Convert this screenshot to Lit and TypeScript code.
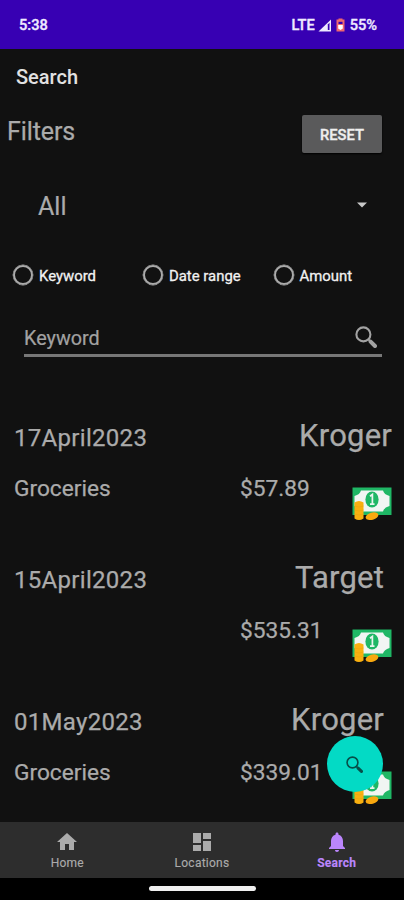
import { LitElement, html, css, svg } from "lit";
import { customElement, property } from "lit/decorators.js";

const magnifier = svg`<circle cx="8.4" cy="8.4" r="7" fill="none" stroke="currentColor" stroke-width="2.1"/><path d="M13.400 13.400L15.500 15.500" stroke="currentColor" stroke-width="2"/><path d="M15.600 15.600L20 20" stroke="currentColor" stroke-width="4" stroke-linecap="round"/>`;

@customElement("money-icon")
class MoneyIcon extends LitElement {
  static styles = css`
    :host { display: block; width: 40px; height: 34px; }
    svg { display: block; }
  `;
  render() {
    return html`<svg width="40" height="34" viewBox="0 0 40 34">
      <rect x="0.500" y="0.500" width="39" height="27.500" fill="#1fb765"/>
      <path d="M9 3.500H31Q32 7.500 37.500 9V19Q32 20.500 31 24.500H9Q8 20.500 2.500 19V9Q8 7.500 9 3.500Z" fill="#f1f5f3"/>
      <ellipse cx="20" cy="12.500" rx="6.600" ry="8" fill="#1fb765"/>
      <path d="M18 9.300L20.400 7.500V17M18 17.200H22.500" fill="none" stroke="#e8f5ee" stroke-width="1.700"/>
      <path d="M2.500 15.500Q7 12.500 11.500 15.500V31.500Q7 34.500 2.500 31.500Z" fill="#f9b010"/>
      <path d="M2.500 19Q7 21 11.500 19M2.500 23Q7 25 11.500 23M2.500 27Q7 29 11.500 27" fill="none" stroke="#eda30d" stroke-width="0.600"/>
      <ellipse cx="20" cy="29.200" rx="6.500" ry="3.600" transform="rotate(-15 20 29.200)" fill="#f9a80f"/>
    </svg>`;
  }
}

@customElement("expense-row")
class ExpenseRow extends LitElement {
  @property() date = "";
  @property() store = "";
  @property() category = "";
  @property() amount = "";
  @property({ type: Boolean, reflect: true }) wide = false;
  static styles = css`
    :host { display: block; height: 142px; box-sizing: border-box; padding: 0 12px 0 14px; color: #ababab; -webkit-text-stroke: 0.25px; }
    .top { display: flex; justify-content: space-between; align-items: baseline; height: 54px; padding-right: 8px; }
    :host([wide]) .top { padding-right: 0; }
    .date { font-size: 24px; letter-spacing: 0.3px; line-height: 36px; }
    .store { font-size: 31px; letter-spacing: 0.2px; line-height: 36px; }
    .bottom { display: grid; grid-template-columns: 226px 113px 40px; height: 52px; }
    .cell { font-size: 22.7px; line-height: 34px; }
    money-icon { margin-top: 15.400px; margin-left: -1px; }
  `;
  render() {
    return html`
      <div class="top"><span class="date">${this.date}</span><span class="store">${this.store}</span></div>
      <div class="bottom"><span class="cell">${this.category}</span><span class="cell">${this.amount}</span><money-icon></money-icon></div>`;
  }
}

@customElement("app-root")
class AppRoot extends LitElement {
  static styles = css`
    :host { display: flex; flex-direction: column; position: relative; width: 404px; height: 900px; overflow: hidden; background: #111; color: #ababab; font-family: Roboto, sans-serif; }
    * { box-sizing: border-box; }
    svg { display: block; flex: none; }
    .status { height: 49px; flex: none; background: #3700b3; color: #eee9ff; display: flex; align-items: center; padding: 1px 27px 0 19px; font-size: 14.600px; font-weight: 500; -webkit-text-stroke: 0.35px; }
    .lte { margin-left: auto; margin-right: 3px; }
    .battery { margin: 0 5px 0 4px; }
    .title { height: 56px; flex: none; padding-left: 16px; font-size: 20px; line-height: 56px; font-weight: 500; color: #e2e2e2; }
    .filters { height: 58px; flex: none; display: flex; justify-content: space-between; padding: 9px 22px 0 7px; }
    .heading { font-size: 25px; line-height: 36px; letter-spacing: -0.1px; -webkit-text-stroke: 0.25px; }
    .reset { width: 80px; height: 38px; margin-top: 1px; border: 0; border-radius: 2px; background: #5a5a5b; color: #eee; font: 500 14.700px/40px Roboto, sans-serif; padding: 0; box-shadow: 0 1px 2px #000; -webkit-text-stroke: 0.35px; }
    .select { height: 86px; flex: none; display: flex; justify-content: space-between; align-items: center; padding: 0 37px 0 38px; font-size: 25px; -webkit-text-stroke: 0.2px; }
    .select svg { margin-top: -3px; }
    .radios { height: 52px; flex: none; display: grid; grid-template-columns: 130px 130.500px 1fr; padding-left: 13px; align-items: center; color: #f1f1f1; font-size: 14.900px; -webkit-text-stroke: 0.3px; }
    .radio { display: flex; align-items: center; gap: 6px; }
    .text { padding-top: 1px; }
    .ring { width: 20px; height: 20px; border: 2.500px solid #ababab; border-radius: 50%; box-shadow: 0 0 0 0.400px #ababab; }
    .field { height: 36px; flex: none; margin: 20px 22px 0 24px; border-bottom: 3px solid #777; display: flex; justify-content: space-between; padding-right: 5px; font-size: 19.800px; line-height: 36px; color: #a2a2a2; -webkit-text-stroke: 0.2px; }
    .field svg { margin-top: 5px; }
    .list { margin-top: 60.600px; flex: 1; min-height: 0; overflow: hidden; }
    .fab { position: absolute; left: 327px; top: 736px; width: 56px; height: 56px; border-radius: 50%; background: #03dac5; color: #064f49; display: flex; align-items: center; justify-content: center; }
    .fab svg { margin-left: -1px; }
    .tabs { height: 56px; flex: none; background: #2d2d2d; display: grid; grid-template-columns: repeat(3, 1fr); }
    .tab { display: flex; flex-direction: column; align-items: center; padding-top: 8px; font-size: 12px; line-height: 14px; letter-spacing: 0.250px; gap: 2px; -webkit-text-stroke: 0.15px; }
    .tab svg { margin-top: -0.500px; margin-bottom: 0.500px; }
    .active { color: #bb86fc; font-weight: 700; }
    .gesture { height: 22px; flex: none; background: #000; display: flex; justify-content: center; padding-top: 8px; }
    .pill { width: 107px; height: 5px; border-radius: 3px; background: #efefef; margin-left: 1px; }
  `;
  tab(name: string, path: string, active = false) {
    return html`<div class="tab ${active ? "active" : ""}">
      <svg width="24" height="24" viewBox="0 0 24 24"><path fill="currentColor" d=${path}/></svg>${name}</div>`;
  }
  render() {
    return html`
      <div class="status"><span>5:38</span><span class="lte">LTE</span>
        <svg width="14" height="13" viewBox="0 0 14 13"><path d="M0.500 12.500L13 0.500V12.500Z" fill="#eee9ff"/><path d="M9.800 5.500L11.500 3.800V11H9.800Z" fill="#3700b3"/></svg>
        <svg class="battery" width="9" height="14" viewBox="0 0 9 14"><path d="M2.500 0.500H6.500V1.500H8.500V13.500H0.500V1.500H2.500Z" fill="#ee6670"/><path d="M2.500 3.800H6.500V6H2.500Z" fill="#3700b3"/><path d="M2.200 7H6.800V10.500L4.500 12L2.200 10.500Z" fill="#fff"/></svg>
        <span>55%</span></div>
      <div class="title">Search</div>
      <div class="filters"><span class="heading">Filters</span><button class="reset">RESET</button></div>
      <div class="select"><span>All</span><svg width="10" height="6" viewBox="0 0 10 6"><path d="M0 0.500H10L5 5.500Z" fill="#c8c8c8"/></svg></div>
      <div class="radios">${["Keyword", "Date range", "Amount"].map((t) => html`<div class="radio"><span class="ring"></span><span class="text">${t}</span></div>`)}</div>
      <div class="field"><span>Keyword</span><svg width="22" height="22" viewBox="0 0 22 22">${magnifier}</svg></div>
      <div class="list">
        <expense-row wide date="17April2023" store="Kroger" category="Groceries" amount="$57.89"></expense-row>
        <expense-row date="15April2023" store="Target" amount="$535.31"></expense-row>
        <expense-row date="01May2023" store="Kroger" category="Groceries" amount="$339.01"></expense-row>
      </div>
      <div class="tabs">
        ${this.tab("Home", "M10 20v-6h4v6h5v-8h3L12 3 2 12h3v8z")}
        ${this.tab("Locations", "M3 13h8V3H3v10zm0 8h8v-6H3v6zm10 0h8V11h-8v10zm0-18v6h8V3h-8z")}
        ${this.tab("Search", "M12 22c1.100 0 2-.9 2-2h-4c0 1.100.89 2 2 2zm6-6v-5c0-3.070-1.640-5.640-4.500-6.320V4c0-.83-.67-1.500-1.500-1.500s-1.500.67-1.500 1.500v.68C7.630 5.360 6 7.920 6 11v5l-2 2v1h16v-1l-2-2z", true)}
      </div>
      <div class="gesture"><div class="pill"></div></div>
      <div class="fab"><svg width="17" height="17" viewBox="0 0 22 22">${magnifier}</svg></div>`;
  }
}
